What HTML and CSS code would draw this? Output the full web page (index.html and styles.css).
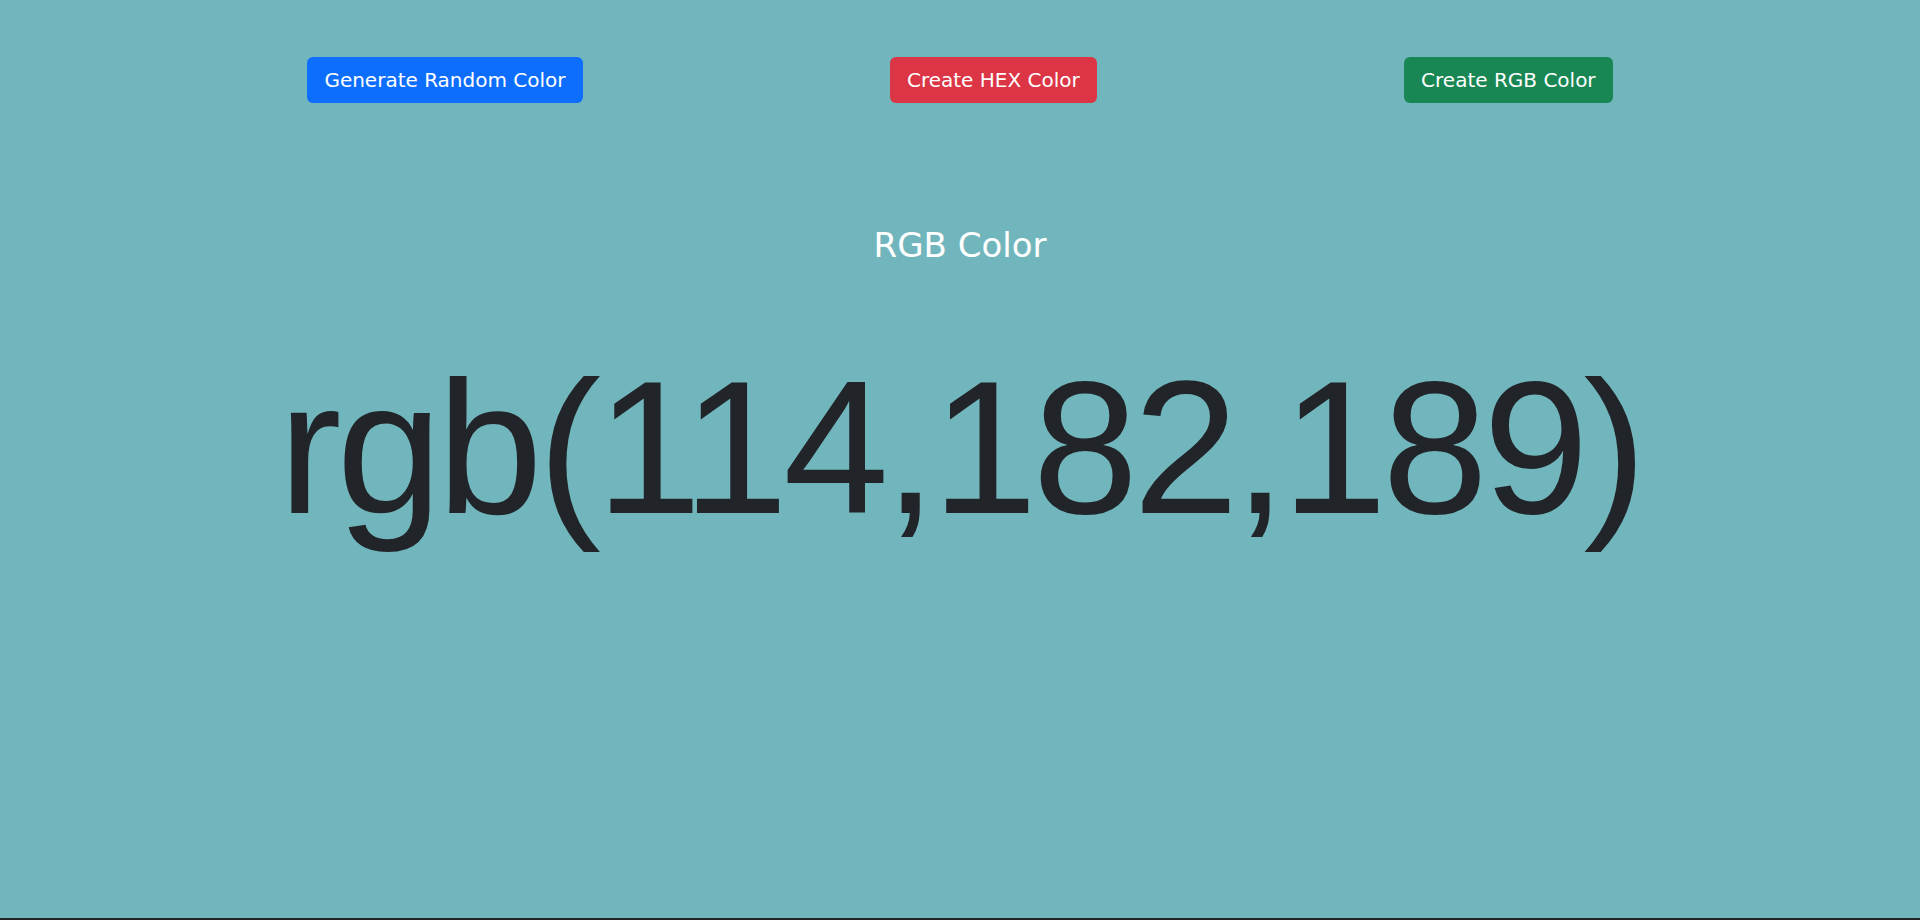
FILE: index.html
```html
<!DOCTYPE html>
<html lang="en">
<head>
<meta charset="utf-8">
<title>Color Generator</title>
<link rel="stylesheet" href="styles.css">
</head>
<body>
<div class="page">
  <main class="main">
    <div class="actions">
      <button class="btn btn-blue">Generate Random Color</button>
      <button class="btn btn-red">Create HEX Color</button>
      <button class="btn btn-green">Create RGB Color</button>
    </div>
    <h2 class="label">RGB Color</h2>
    <h1 class="value">rgb(114,182,189)</h1>
  </main>
  <div class="bar"></div>
</div>
</body>
</html>
```
FILE: styles.css
```css
html, body {
  margin: 0;
  padding: 0;
}
body {
  background: #72b6bd;
  font-family: "DejaVu Sans", "Noto Sans", sans-serif;
  overflow: hidden;
}
.page {
  height: 920px;
  display: flex;
  flex-direction: column;
}
.main {
  flex: 1;
  display: flex;
  flex-direction: column;
  align-items: center;
}
.actions {
  align-self: stretch;
  display: flex;
  justify-content: space-evenly;
  padding-top: 57px;
}
.btn {
  font-family: inherit;
  font-size: 20px;
  line-height: 28px;
  padding: 8px 16px;
  border: 1px solid transparent;
  border-radius: 6px;
  color: #fff;
  cursor: pointer;
}
.btn-blue { background: #0d6efd; }
.btn-red { background: #dc3545; }
.btn-green { background: #198754; }
.label {
  margin: 122px 0 0;
  font-size: 34px;
  line-height: 40px;
  font-weight: 400;
  color: #fff;
}
.value {
  margin: 72px 0 0;
  font-family: "Liberation Sans", Arial, sans-serif;
  font-size: 190px;
  line-height: 220px;
  font-weight: 400;
  color: #212529;
  letter-spacing: -5px;
}
.bar {
  height: 2px;
  background: #222426;
}
```
